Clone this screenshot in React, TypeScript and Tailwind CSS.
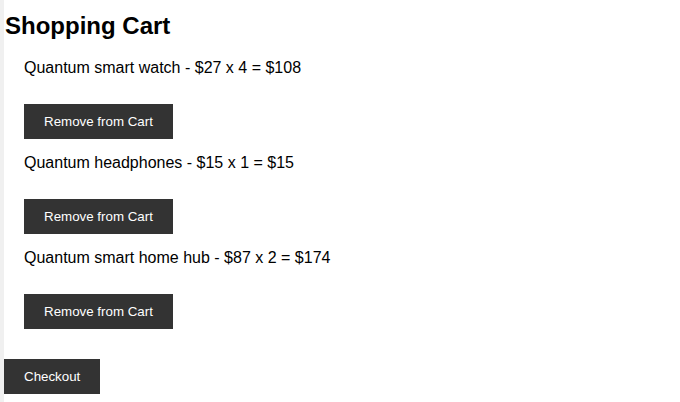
import React from 'react'

type CartItem = {
  name: string
  price: number
  qty: number
}

const items: CartItem[] = [
  { name: 'Quantum smart watch', price: 27, qty: 4 },
  { name: 'Quantum headphones', price: 15, qty: 1 },
  { name: 'Quantum smart home hub', price: 87, qty: 2 },
]

const btn =
  "block h-[35px] bg-[#333333] px-[20px] text-[13.333px] text-white font-['Liberation_Sans',Arial,sans-serif] leading-none cursor-pointer"

export default function App() {
  return (
    <div className="flex min-h-screen bg-white font-['Liberation_Sans',Arial,sans-serif] text-black">
      {/* thin grey gutter on the left edge */}
      <div className="w-[4px] shrink-0 bg-[#f0f0f0]" />

      <div className="flex-1 pt-[12px]">
        <h1 className="pl-[1px] text-[24px] font-bold leading-[28px]">Shopping Cart</h1>

        <ul className="mt-[19px] pl-[20px]">
          {items.map((item) => (
            <li className="mb-[15px]" key={item.name}>
              <p className="text-[16px] leading-[18px]">
                {item.name} - ${item.price} x {item.qty} = ${item.price * item.qty}
              </p>
              <button className={`${btn} mt-[27px]`} type="button">
                Remove from Cart
              </button>
            </li>
          ))}
        </ul>

        <button className={`${btn} mt-[30px]`} type="button">
          Checkout
        </button>
      </div>
    </div>
  )
}
